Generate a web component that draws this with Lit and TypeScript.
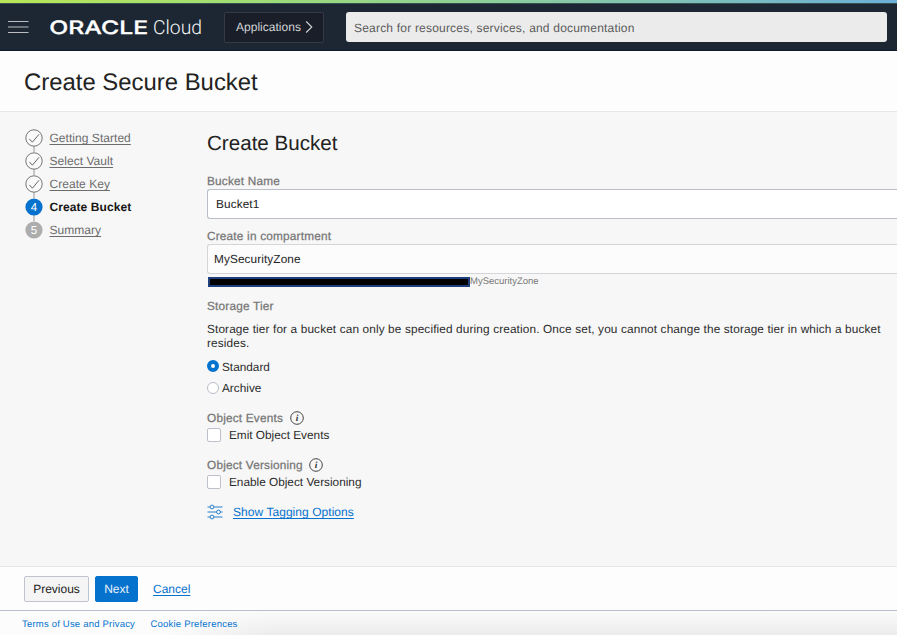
import { LitElement, html, css, svg } from "lit";
import { customElement, property, state } from "lit/decorators.js";
import { classMap } from "lit/directives/class-map.js";

type StepState = "done" | "current" | "todo";

@customElement("top-bar")
class TopBar extends LitElement {
  static styles = css`
    :host { display: block; height: 51px; box-sizing: border-box; background: #1d2733; }
    .stripe { height: 3px; background: linear-gradient(90deg, #b9e656 0%, #9ddc78 30%, #86c8a8 65%, #6cafd8 100%); }
    .bar { display: flex; align-items: center; height: 48px; box-sizing: border-box; border-top: 1px solid #34504f; border-bottom: 1px solid #0d1c2d; padding: 0 10px 0 8px; }
    .menu { width: 21px; height: 14px; display: block; }
    .brand { width: 153px; height: 24px; display: block; margin-left: 21px; overflow: visible; }
    .oracle { font: 500 18.5px "Inter", "Liberation Sans", sans-serif; fill: #fff; stroke: #fff; stroke-width: 0.3px; }
    .cloud { font: 300 19.5px "Roboto", "Open Sans", sans-serif; fill: #f4f5f6; }
    .apps { display: flex; align-items: center; justify-content: space-between; box-sizing: border-box; width: 100px; height: 31px; margin-left: 21px; padding: 0 10px 0 11px; border: 1px solid #343b46; border-radius: 2px; background: #191e28; color: #d2d4d7; font-size: 12px; letter-spacing: 0.02px; }
    .chev { width: 8px; height: 14px; display: block; }
    .search { box-sizing: border-box; width: 541px; height: 30px; margin-left: 22px; padding: 1px 8px 0; line-height: 30px; border-radius: 3px; background: #ebebeb; color: #5b5b5b; font-size: 12px; letter-spacing: 0.2px; }
  `;
  render() {
    return html`
      <div class="stripe"></div>
      <div class="bar">
        <svg class="menu" viewBox="0 0 21 14" stroke="#b9bdc2" stroke-width="1.2">
          <path d="M0 1.5H20.5M0 7H20.5M0 12.5H20.5" />
        </svg>
        <svg class="brand" viewBox="0 0 153 24">
          <text class="oracle" x="-0.8" y="18.9" textLength="99" lengthAdjust="spacingAndGlyphs">ORACLE</text>
          <text class="cloud" x="103" y="18.9" textLength="49" lengthAdjust="spacingAndGlyphs">Cloud</text>
        </svg>
        <div class="apps">
          <span>Applications</span>
          <svg class="chev" viewBox="0 0 8 14" fill="none" stroke="#d2d4d7" stroke-width="1.1"><path d="M1.2 1.5L6.8 7L1.2 12.5" /></svg>
        </div>
        <div class="search">Search for resources, services, and documentation</div>
      </div>
    `;
  }
}

@customElement("wizard-step")
class WizardStep extends LitElement {
  @property() label = "";
  @property({ type: Number }) num = 1;
  @property() status: StepState = "todo";
  @property({ type: Boolean }) last = false;

  static styles = css`
    :host { display: block; height: 23px; }
    .row { display: flex; align-items: flex-start; gap: 6.5px; }
    .mark { width: 18px; height: 23px; display: block; flex: none; }
    .num { font: 11.5px "Liberation Sans", sans-serif; fill: #fff; text-anchor: middle; }
    .label { line-height: 19px; font-size: 12px; letter-spacing: 0.04px; color: #6c6c6c; text-decoration: underline; text-underline-offset: 1.5px; text-decoration-thickness: 1px; }
    .current { color: #161513; font-weight: 700; text-decoration: none; letter-spacing: 0.08px; }
  `;
  render() {
    const mark =
      this.status === "done"
        ? svg`<circle cx="9" cy="9" r="8.2" fill="#fafafa" stroke="#666" stroke-width="0.9"/>
              <path d="M4.3 9.9L7.4 13.2L14 5.3" fill="none" stroke="#555" stroke-width="0.9"/>`
        : svg`<circle cx="9" cy="9" r="8.6" fill=${this.status === "current" ? "#0572ce" : "#adadad"}/>
              <text class="num" x="9" y="13.1">${this.num}</text>`;
    return html`
      <div class="row">
        <svg class="mark" viewBox="0 0 18 23">
          ${this.last ? null : svg`<path d="M9 17V23" stroke="#999" stroke-width="1"/>`}
          ${mark}
        </svg>
        <span class=${classMap({ label: true, current: this.status === "current" })}>${this.label}</span>
      </div>
    `;
  }
}

@customElement("bucket-form")
class BucketForm extends LitElement {
  @state() private tier = "Standard";

  static styles = css`
    :host { display: block; font-size: 11.8px; color: #2b2b2b; }
    h2 { box-sizing: border-box; margin: 0; padding-top: 18px; height: 61px; line-height: 28px; font-size: 20.6px; font-weight: 400; color: #222; }
    .label { height: 16px; line-height: 16px; color: #757575; font-weight: 400; -webkit-text-stroke: 0.25px #757575; letter-spacing: 0.2px; }
    .field { box-sizing: border-box; height: 30px; line-height: 29px; border: 1px solid #b9bec8; border-right: 0; border-radius: 3px 0 0 3px; background: #fff; padding-left: 8px; color: #222; margin-bottom: 9px; letter-spacing: 0.1px; }
    .select { background: #fcfcfc; border-color: #d3d5d9; padding-left: 6px; margin-bottom: 0; }
    .path { display: flex; align-items: center; height: 15px; font-size: 9.5px; color: #777; }
    .redact { box-sizing: border-box; width: 262px; height: 10px; margin-left: 1px; border: 2px solid #1f3f7c; background: #000; }
    .tier { margin-top: 9px; }
    .note { margin: 9px 0 0; width: 680px; line-height: 13.5px; letter-spacing: 0.135px; }
    .radios { margin-top: 6px; }
    .radio { display: flex; align-items: center; height: 21.5px; gap: 3px; }
    .dot { box-sizing: border-box; width: 12px; height: 12px; border-radius: 50%; border: 1px solid #b9bec8; background: #fff; margin-top: -1px; }
    .on { border: 4.5px solid #0572ce; }
    .head { display: flex; align-items: center; height: 18px; gap: 7px; }
    .info { width: 14px; height: 14px; display: block; }
    .versions .info { margin-left: -1px; }
    .i { font: italic 700 9.5px "Liberation Serif", serif; fill: #333; text-anchor: middle; }
    .check { display: flex; align-items: center; height: 16px; gap: 8px; }
    .box { box-sizing: border-box; width: 14px; height: 14px; border: 1px solid #bcc1ca; border-radius: 2px; background: #fff; margin-top: -1px; }
    .events { margin-top: 10px; }
    .versions { margin-top: 13px; }
    .tagging { display: flex; align-items: center; height: 18px; margin-top: 13px; }
    .sliders { width: 16px; height: 16px; display: block; margin-right: 10px; }
    a { color: #0572ce; font-size: 12px; letter-spacing: 0.05px; text-decoration: underline; text-underline-offset: 1.5px; text-decoration-thickness: 1px; }
  `;

  private heading(text: string) {
    return html`<div class="head">
      <span class="label">${text}</span>
      <svg class="info" viewBox="0 0 14 14"><circle cx="7" cy="7" r="6.3" fill="none" stroke="#444" stroke-width="1"/><text class="i" x="7" y="10.2">i</text></svg>
    </div>`;
  }

  private check(text: string) {
    return html`<div class="check"><span class="box"></span><span>${text}</span></div>`;
  }

  render() {
    return html`
      <h2>Create Bucket</h2>
      <div class="label">Bucket Name</div>
      <div class="field">Bucket1</div>
      <div class="label">Create in compartment</div>
      <div class="field select">MySecurityZone</div>
      <div class="path"><span class="redact"></span><span>MySecurityZone</span></div>
      <div class="label tier">Storage Tier</div>
      <p class="note">Storage tier for a bucket can only be specified during creation. Once set, you cannot change the storage tier in which a bucket resides.</p>
      <div class="radios">
        ${["Standard", "Archive"].map(
          (t) => html`<div class="radio" @click=${() => (this.tier = t)}>
            <span class=${classMap({ dot: true, on: this.tier === t })}></span><span>${t}</span>
          </div>`
        )}
      </div>
      <div class="events">${this.heading("Object Events")}${this.check("Emit Object Events")}</div>
      <div class="versions">${this.heading("Object Versioning")}${this.check("Enable Object Versioning")}</div>
      <div class="tagging">
        <svg class="sliders" viewBox="0 0 16 16" fill="none" stroke="#2a7fcb" stroke-width="1">
          <path d="M0.5 3H3M7 3H15.5M0.5 8H9.5M13.5 8H15.5M0.5 13H3M7 13H15.5" />
          <circle cx="5" cy="3" r="1.9" /><circle cx="11.5" cy="8" r="1.9" /><circle cx="5" cy="13" r="1.9" />
        </svg>
        <a>Show Tagging Options</a>
      </div>
    `;
  }
}

@customElement("app-root")
class AppRoot extends LitElement {
  private steps: { label: string; status: StepState }[] = [
    { label: "Getting Started", status: "done" },
    { label: "Select Vault", status: "done" },
    { label: "Create Key", status: "done" },
    { label: "Create Bucket", status: "current" },
    { label: "Summary", status: "todo" },
  ];

  static styles = css`
    :host { display: block; height: 636px; background: #fff; overflow: hidden; font-family: "Liberation Sans", Arial, sans-serif; font-size: 12px; text-rendering: geometricPrecision; }
    .page { width: 897px; height: 635px; overflow: hidden; display: flex; flex-direction: column; background: #fdfdfd; }
    h1 { box-sizing: border-box; height: 61px; margin: 0; padding-left: 24px; line-height: 64px; font-size: 23.9px; font-weight: 400; color: #222; border-bottom: 1px solid #e8e8e8; flex: none; }
    .main { display: grid; grid-template-columns: 207px 690px; height: 454px; background: #f7f7f7; flex: none; }
    .steps { padding: 17px 0 0 25px; }
    .actions { box-sizing: border-box; display: flex; align-items: center; height: 45px; padding-left: 24px; border-top: 1px solid #e6e6e6; border-bottom: 1px solid #b9bfcc; flex: none; }
    .btn { box-sizing: border-box; height: 26px; line-height: 25px; border-radius: 2px; text-align: center; border: 1px solid #bfc4cd; background: #f5f5f5; color: #222; }
    .prev { width: 65px; }
    .next { width: 43px; margin-left: 6px; border-color: #0572ce; background: #0572ce; color: #e9f3fb; }
    .cancel { margin-left: 15px; color: #0572ce; text-decoration: underline; text-underline-offset: 1.5px; text-decoration-thickness: 1px; }
    .footer { display: flex; align-items: center; gap: 15.5px; flex: 1; padding: 3px 0 0 22px; font-size: 9.5px; color: #0572ce; letter-spacing: 0.2px; background: linear-gradient(90deg, #fcfcfc 18%, rgba(252, 252, 252, 0) 30%), linear-gradient(#fbfbfb, #ececec); }
  `;
  render() {
    return html`
      <div class="page">
        <top-bar></top-bar>
        <h1>Create Secure Bucket</h1>
        <div class="main">
          <div class="steps">
            ${this.steps.map(
              (s, i) => html`<wizard-step .label=${s.label} .num=${i + 1} .status=${s.status} .last=${i === this.steps.length - 1}></wizard-step>`
            )}
          </div>
          <bucket-form></bucket-form>
        </div>
        <div class="actions">
          <div class="btn prev">Previous</div>
          <div class="btn next">Next</div>
          <span class="cancel">Cancel</span>
        </div>
        <div class="footer"><span>Terms of Use and Privacy</span><span>Cookie Preferences</span></div>
      </div>
    `;
  }
}
